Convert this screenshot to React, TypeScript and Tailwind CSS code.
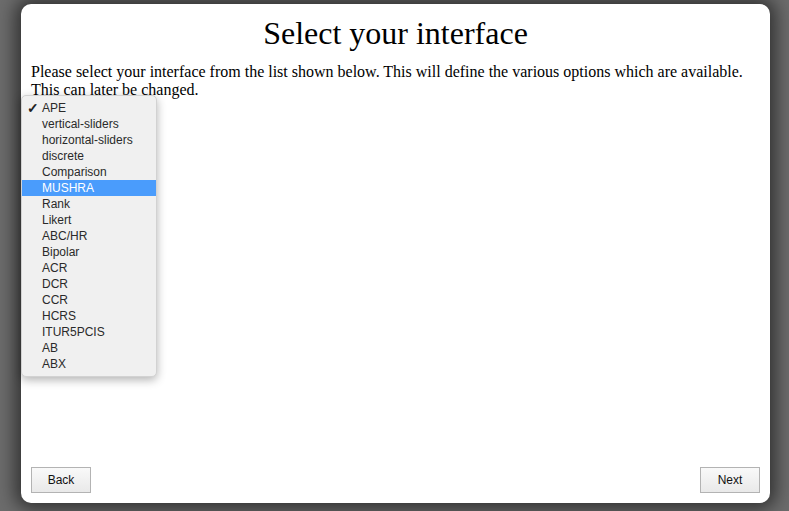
import { useState } from 'react';

const INTERFACES = [
  'APE',
  'vertical-sliders',
  'horizontal-sliders',
  'discrete',
  'Comparison',
  'MUSHRA',
  'Rank',
  'Likert',
  'ABC/HR',
  'Bipolar',
  'ACR',
  'DCR',
  'CCR',
  'HCRS',
  'ITUR5PCIS',
  'AB',
  'ABX',
];

export default function App() {
  const [selected] = useState('APE');
  const [hover, setHover] = useState('MUSHRA');

  return (
    <div className="h-[511px] w-[789px] overflow-hidden bg-[#6c6c6c] pt-[4px] pr-[19px] pb-[8px] pl-[21px]">
      <div className="relative flex h-full flex-col rounded-[10px] bg-white px-[10px] pt-[12px] pb-[10px] shadow-[0_0_18px_6px_rgba(0,0,0,0.55)]">
        <h1 className="text-center font-['Liberation_Serif',serif] text-[32px] leading-[35px] text-black">
          Select your interface
        </h1>
        <p className="mt-[12px] font-['Liberation_Serif',serif] text-[16px] leading-[18px] text-black">
          Please select your interface from the list shown below. This will define the various options which are
          available. This can later be changed.
        </p>

        <div className="flex-1" />

        <div className="flex items-end justify-between">
          <button className="h-[26px] w-[60px] border border-[#b3b3b3] bg-gradient-to-b from-[#f9f9f9] to-[#e9e9e9] font-['Liberation_Sans',sans-serif] text-[12px] text-[#111]">
            Back
          </button>
          <button className="h-[26px] w-[60px] border border-[#b3b3b3] bg-gradient-to-b from-[#f9f9f9] to-[#e9e9e9] font-['Liberation_Sans',sans-serif] text-[12px] text-[#111]">
            Next
          </button>
        </div>

        {/* open select menu */}
        <ul className="absolute top-[91px] left-0 w-[136px] rounded-[5px] border border-[#d2d2d2] bg-[#f0f0f0] py-[4px] font-['Liberation_Sans',sans-serif] text-[12px] shadow-[0_3px_10px_rgba(0,0,0,0.3)]">
          {INTERFACES.map((name) => {
            const active = name === hover;
            return (
              <li
                key={name}
                onMouseEnter={() => setHover(name)}
                className={
                  'relative h-[16px] pl-[20px] leading-[16px] ' +
                  (active ? 'bg-[#4a9cfc] text-white' : 'text-[#2a2a2a]')
                }
              >
                {name === selected && (
                  <span className="absolute top-0 left-[5px] text-[14px] font-bold text-[#222]">✓</span>
                )}
                {name}
              </li>
            );
          })}
        </ul>
      </div>
    </div>
  );
}
